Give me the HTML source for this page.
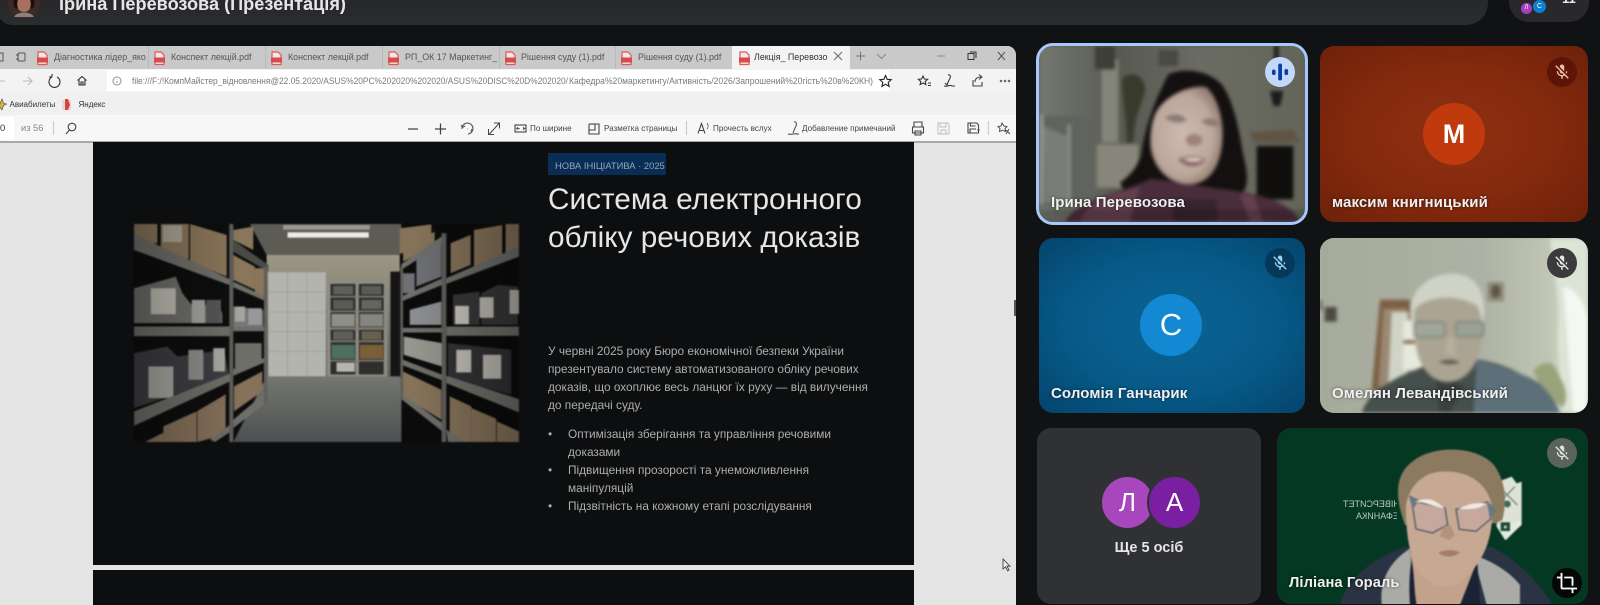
<!DOCTYPE html>
<html lang="uk"><head><meta charset="utf-8"><title>Meet</title>
<style>
*{box-sizing:border-box}
html,body{margin:0;padding:0;width:1600px;height:605px;overflow:hidden;background:#111213;font-family:"Liberation Sans","Noto Sans CJK SC",sans-serif}
#w{position:absolute;left:0;top:0;width:1600px;height:605px;overflow:hidden;filter:blur(.35px)}
.a{position:absolute}
.t{position:absolute;white-space:nowrap}
.tab{position:absolute;top:46px;height:23px;border-right:1px solid #b9b9b9}
.tab span{position:absolute;left:21px;top:6px;font-size:8.9px;color:#555;white-space:nowrap}
.tile{position:absolute;border-radius:14px;overflow:hidden}
.name{position:absolute;font-size:15px;font-weight:bold;color:#f0f0f0;white-space:nowrap;text-shadow:0 0 3px rgba(0,0,0,.55);letter-spacing:.1px}
.av{position:absolute;border-radius:50%;color:#fff;text-align:center}
.ic{position:absolute;width:30px;height:30px;border-radius:50%}
.ic svg{position:absolute;left:6px;top:6px;width:18px;height:18px}
.lb{position:absolute;top:124px;font-size:8.100px;color:#444;white-space:nowrap}
.sl{position:absolute;left:548px;font-size:11.850px;color:#aeaeae;white-space:nowrap;line-height:18px}
svg{display:block}
</style></head><body><div id="w">

<!-- top bar -->
<div class="a" style="left:-2px;top:-20px;width:1490px;height:45px;background:linear-gradient(#232426,#2b2c2f);border-radius:0 0 22px 14px"></div>
<svg class="a" style="left:6px;top:-15px" width="36" height="36" viewBox="0 0 36 36"><circle cx="18" cy="18" r="16" fill="#3b2a26"/><ellipse cx="18" cy="17" rx="8" ry="10" fill="#a8705e"/><path d="M8 22C6 8 12 4 18 4s12 4 10 18l-4 2c2-8 0-12-6-12s-8 4-6 12z" fill="#1d0e0b"/><path d="M8 32c3-6 17-6 20 0z" fill="#8a7f7a"/></svg>
<div class="t" style="left:59px;top:-6px;font-size:18.150px;font-weight:bold;color:#e6e6e6;line-height:20px">Ірина Перевозова (Презентація)</div>
<div class="a" style="left:1509px;top:-20px;width:80px;height:42px;background:#29292c;border-radius:0 0 20px 20px"></div>
<div class="av" style="left:1521px;top:3px;width:11px;height:11px;background:#a63fc0;font-size:6px;line-height:11px">Л</div>
<div class="av" style="left:1533px;top:0;width:13px;height:13px;background:#0b82d0;font-size:7px;line-height:13px">С</div>
<div class="t" style="left:1562px;top:-9px;font-size:13px;font-weight:bold;color:#eee;line-height:15px">11</div>

<!-- browser -->
<div class="a" style="left:-10px;top:46px;width:1026px;height:570px;background:#e4e4e4;border-radius:0 9px 0 0;overflow:hidden">
<div class="a" style="left:0;top:0;width:1026px;height:23px;background:#c9c9c9"></div>
<div class="a" style="left:0;top:23px;width:1026px;height:23px;background:#f3f3f3"></div>
<div class="a" style="left:117px;top:24px;width:782px;height:21px;background:#fff"></div>
<div class="a" style="left:0;top:46px;width:1026px;height:23px;background:#f0f0f0"></div>
<div class="a" style="left:0;top:69px;width:1026px;height:26px;background:#f7f7f7"></div>
<div class="a" style="left:0;top:95px;width:1026px;height:1.5px;background:#a9a9a9"></div>
<div class="a" style="left:10px;top:71px;width:14px;height:23px;background:#fff"></div>
</div>

<svg class="a" style="left:0;top:46px" width="1016" height="23" viewBox="0 0 1016 23" fill="none" stroke="#555" stroke-width="1">
<rect x="-4" y="7" width="7" height="8" /><rect x="18" y="7" width="7" height="8" rx="1"/><path d="M16 9h3M16 13h3"/>
<g id="p"><path d="M38 6h6l3 3v9.500H38z" fill="#f6e6e6" stroke="#d85a5a" stroke-width="1.200"/><rect x="37" y="11.500" width="11" height="5" fill="#d94a4a" stroke="none"/></g>
<use href="#p" x="117"/><use href="#p" x="234"/><use href="#p" x="351"/><use href="#p" x="468"/><use href="#p" x="584"/>
</svg>
<div class="tab" style="left:33px;width:116px"><span>Діагностика лідер_яко</span></div>
<div class="tab" style="left:149px;width:117px"><span style="left:22px">Конспект лекцій.pdf</span></div>
<div class="tab" style="left:266px;width:117px"><span style="left:22px">Конспект лекцій.pdf</span></div>
<div class="tab" style="left:383px;width:117px"><span style="left:22px">РП_ОК 17 Маркетинг_</span></div>
<div class="tab" style="left:500px;width:116px"><span style="left:21px">Рішення суду (1).pdf</span></div>
<div class="tab" style="left:616px;width:116px;border:0"><span style="left:22px">Рішення суду (1).pdf</span></div>
<div class="a" style="left:732px;top:46px;width:118px;height:23px;background:#f3f3f3"></div>
<svg class="a" style="left:0;top:46px" width="1016" height="23" viewBox="0 0 1016 23" fill="none" stroke="#666" stroke-width="1">
<g><path d="M740 6h6l3 3v9.500h-9z" fill="#f6e6e6" stroke="#d85a5a" stroke-width="1.200"/><rect x="739" y="11.500" width="11" height="5" fill="#d94a4a" stroke="none"/></g>
<path d="M834 6l8 8M842 6l-8 8"/><path d="M856 10h9M860.500 5.500v9" stroke="#777"/><path d="M877 8l4.500 4.500L886 8" stroke="#888"/>
<path d="M937 10h8" stroke="#888"/><rect x="968" y="7.500" width="6" height="6" stroke="#333"/><path d="M970 6h6v6" stroke="#333"/><path d="M998 6l7 8M1005 6l-7 8" stroke="#555"/>
</svg>
<div class="t" style="left:754px;top:52px;font-size:8.900px;color:#333">Лекція_ Перевозо</div>

<svg class="a" style="left:0;top:69px" width="1016" height="22" viewBox="0 0 1016 22" fill="none" stroke="#666" stroke-width="1.100">
<path d="M-3 12h8M-1 8l-3.500 4 3.500 4" stroke="#bbb"/><path d="M23 12h9M28 8l4 4-4 4" stroke="#bbb"/>
<path d="M52 8a5.500 5.500 0 1 0 5 0M52 8V5M52 8h-3" stroke="#333"/><path d="M77.500 11.500l4.500-4 4.500 4M79 10.500V16h6v-5.500M81 16v-3h2v3" stroke="#333"/>
<circle cx="117" cy="12" r="4" stroke="#999"/><path d="M117 10.500v.5M117 12v2" stroke="#999"/>
<path d="M885.500 6.500l1.700 3.800 4 .4-3 2.700.9 4-3.600-2.100-3.600 2.100.9-4-3-2.700 4-.4z" stroke="#222"/>
<path d="M923 7l1.400 3 3.200.3-2.400 2.100.7 3.200-2.900-1.600-2.900 1.600.7-3.200-2.400-2.100 3.200-.3zM928 14h3M928 16.500h3" stroke="#333"/>
<path d="M948 6c3-1 3 2 1 5l-2 5M944 17c4 1 6-2 8 0h3M945 14l2 2" stroke="#333"/>
<path d="M973 11v6h9v-4M975 13c0-3 2-5 6-5M979 5.500l3 2.500-3 2.500" stroke="#444"/>
<circle cx="1001" cy="12" r=".7" fill="#555"/><circle cx="1005" cy="12" r=".7" fill="#555"/><circle cx="1009" cy="12" r=".7" fill="#555"/>
<g font-family="Liberation Sans,sans-serif" font-size="9" fill="#7a7a7a" stroke="none">
<text x="132" y="15" textLength="436" lengthAdjust="spacingAndGlyphs">file:///F:/!КомпМайстер_відновлення@22.05.2020/ASUS%20PC%202020%202020/ASUS%20DISC%20D%202020/</text>
<text x="569" y="15" textLength="304" lengthAdjust="spacingAndGlyphs">Кафедра%20маркетингу/Активність/2026/Запрошений%20гість%20в%20КН)</text>
</g>
</svg>

<svg class="a" style="left:0;top:92px" width="90" height="23" viewBox="0 0 90 23"><path d="M2 7l1.500 4 3 1-3 1.500L2 18l-3-4z" fill="#d9b23a" stroke="#444" stroke-width=".6"/><path d="M62 8h9v9l-1 1h-7l-1-1z" fill="#e9d6d0"/><path d="M65 7h3l2 6-2 5h-3z" fill="#d5463a"/></svg>
<div class="t" style="left:9.500px;top:100px;font-size:8px;color:#333">Авиабилеты</div>
<div class="t" style="left:78.500px;top:100px;font-size:8px;color:#333">Яндекс</div>

<div class="t" style="left:0;top:123px;font-size:9.500px;color:#333">0</div>
<div class="t" style="left:21px;top:123px;font-size:9.300px;color:#888">из 56</div>
<svg class="a" style="left:0;top:115px" width="1016" height="26" viewBox="0 0 1016 26" fill="none" stroke="#444" stroke-width="1.100">
<path d="M53.500 6v14" stroke="#ccc"/><circle cx="72" cy="12" r="3.800"/><path d="M69.500 15l-3.500 4"/>
<path d="M408 14h10M435 14h11M440.500 8.500v11" stroke-width="1.300"/>
<path d="M462 14a5.500 5.500 0 1 1 6 5M472 14l-1 2.500M461 10l1.500 2.500 2.500-1.500M467 14h.5" stroke="#555"/>
<path d="M489 20l10-11M494 8.500h5.500V14M494 20h-5.500v-5.500" transform="translate(0 -.5)" stroke-width="1"/>
<rect x="515" y="10" width="11" height="7"/><path d="M517 13.500h3M526 13.500h-3M518 12l-1.500 1.500L518 15M523 12l1.500 1.500L523 15" stroke-width=".8"/>
<path d="M589 9v10h10V9h-4v6h-6" /><path d="M589 9h6"/>
<path d="M686.500 6v14" stroke="#ccc"/>
<path d="M698 18.500l3.500-10 3.500 10M699.500 15.500h4"/><path d="M707 8c1.500 2 1.500 4 0 6" stroke-width=".7"/>
<path d="M794 7c3-1 3 3 1 6l-2 5M788 19c4 1 7-1 9 0h2" stroke-width="1"/>
<path d="M914 12v-5h8v5M912.500 12h11v6h-11zM915 16h6v4h-6z"/>
<path d="M938 8h10l1 1v10h-11zM940 8v4h6V8M941 19v-4h5v4" stroke="#bbb" stroke-width=".9"/>
<path d="M968 8h9l1.500 2v8h-10.500zM970.500 8v3h5M970 18v-4h6" /><path d="M977 15h3M978.500 13.500v3" stroke-width=".8"/>
<path d="M988.500 6v14" stroke="#ccc"/>
<path d="M1002 8l2 3 3 .5-2 2 .5 3-3-1.300-3 1.300.5-3-2-2 3-.5zM1006 15l4 4M1009 14l-3 5" stroke-width=".9"/>
</svg>
<div class="lb" style="left:530px">По ширине</div>
<div class="lb" style="left:604px">Разметка страницы</div>
<div class="lb" style="left:713px">Прочесть вслух</div>
<div class="lb" style="left:802px">Добавление примечаний</div>

<!-- slides -->
<div class="a" style="left:93px;top:142px;width:821px;height:423px;background:#0d0e0f"></div>
<div class="a" style="left:93px;top:570px;width:821px;height:35px;background:#0d0e0f"></div>
<div class="a" style="left:1014px;top:300px;width:2px;height:16px;background:#555"></div>
<svg class="a" style="left:1002px;top:558px" width="10" height="14" viewBox="0 0 10 14"><path d="M1 1v10l2.500-2.200 2 4 1.500-.7-2-3.900H8z" fill="#eee" stroke="#333" stroke-width=".8"/></svg>

<!-- storage room -->
<svg class="a" style="left:134px;top:224px;filter:blur(.7px)" width="385" height="218" viewBox="42 42 1156 655">
<defs><linearGradient id="f" x1="0" y1="0" x2="0" y2="1"><stop offset="0" stop-color="#74776f"/><stop offset="1" stop-color="#4c4f50"/></linearGradient>
<linearGradient id="wg" x1="0" y1="0" x2="0" y2="1"><stop offset="0" stop-color="#9a9785"/><stop offset="1" stop-color="#66655a"/></linearGradient>
<linearGradient id="vg" x1="0" x2="1" y1="0" y2="0"><stop offset="0" stop-color="#000" stop-opacity=".3"/><stop offset=".28" stop-color="#000" stop-opacity="0"/><stop offset=".72" stop-color="#000" stop-opacity="0"/><stop offset="1" stop-color="#000" stop-opacity=".3"/></linearGradient></defs>
<rect x="42" y="42" width="1156" height="655" fill="#0d0d0d"/>
<polygon points="390,42 850,42 840,135 440,135" fill="#5c5c54"/>
<rect x="490" y="45" width="260" height="14" fill="#9a9a92"/>
<rect x="503" y="67" width="244" height="16" fill="#ecece2"/>
<rect x="440" y="135" width="400" height="365" fill="url(#wg)"/>
<rect x="445" y="187" width="173" height="313" fill="#b4b4ae"/>
<g stroke="#9a9a95" stroke-width="2"><path d="M445 247h173M445 307h173M445 365h173M445 425h173M503 187v313M561 187v313"/></g>
<rect x="622" y="212" width="180" height="292" fill="#8e8e86"/>
<rect x="632" y="222" width="75" height="272" fill="#2f2e2a"/><rect x="717" y="222" width="75" height="272" fill="#2f2e2a"/>
<g fill="#7e7e76"><rect x="632" y="258" width="160" height="5"/><rect x="632" y="302" width="160" height="5"/><rect x="632" y="352" width="160" height="8"/><rect x="632" y="392" width="160" height="5"/><rect x="632" y="450" width="160" height="5"/></g>
<rect x="635" y="312" width="70" height="38" fill="#8f8f88"/><rect x="720" y="312" width="70" height="38" fill="#85857f"/>
<rect x="635" y="405" width="70" height="42" fill="#4f6e60"/><rect x="720" y="405" width="70" height="42" fill="#7c5f38"/>
<rect x="650" y="458" width="55" height="28" fill="#b5b5ad"/><rect x="640" y="228" width="60" height="26" fill="#5f5f5b"/><rect x="725" y="228" width="60" height="26" fill="#5a5a56"/><rect x="640" y="270" width="60" height="28" fill="#5a5a56"/><rect x="725" y="270" width="60" height="28" fill="#65655f"/><rect x="640" y="364" width="60" height="26" fill="#5f5f5a"/><rect x="725" y="364" width="60" height="26" fill="#67604f"/>
<rect x="812" y="185" width="30" height="315" fill="#151515"/>
<polygon points="440,500 840,500 960,697 340,697" fill="url(#f)"/>
<!-- left boxes & bags -->
<g fill="#8a765a"><rect x="42" y="42" width="70" height="58"/><rect x="122" y="42" width="84" height="105"/><polygon points="210,42 320,75 320,200 210,155"/><polygon points="340,60 400,50 400,120 340,90"/><polygon points="340,135 405,170 405,240 340,210"/><rect x="405" y="175" width="38" height="85"/></g>
<rect x="128" y="46" width="58" height="50" fill="#aaa596"/>
<g fill="#6e6e6b"><path d="M42 235l55-15 70-20 20 50 40 50 60-30 20 40 0 30H42z"/><path d="M340 290l90 10v50h-90z" fill="#777"/></g>
<rect x="92" y="235" width="75" height="78" fill="#c0beb4"/><rect x="215" y="270" width="40" height="70" fill="#a3a39e"/><rect x="258" y="270" width="45" height="70" fill="#57575a"/><rect x="345" y="290" width="30" height="45" fill="#a5a5a0"/><rect x="385" y="295" width="40" height="50" fill="#98989a"/>
<g fill="#3d3e42"><path d="M42 430l100-20 30 30 140-20 15 75-130 50-155 50z"/></g>
<rect x="85" y="470" width="75" height="95" fill="#a8a8a1"/><rect x="205" y="420" width="45" height="90" fill="#8d8d89"/><rect x="280" y="415" width="35" height="70" fill="#aaaaa3"/>
<path d="M345 400h80v60l-80 15z" fill="#6e6e69"/>
<g fill="#86715a"><path d="M130 697V650l100-45v92z"/><path d="M232 604l85-50v120l-85 23z"/><path d="M342 530l85-45v60l-85 60z"/><path d="M75 697l55-28v28z"/></g>
<!-- left planks -->
<g fill="#6f6f6a"><polygon points="42,72 330,208 330,226 42,120"/><rect x="42" y="350" width="288" height="29"/><polygon points="42,605 330,492 330,515 42,648"/><polygon points="340,215 440,262 440,275 340,232"/><rect x="340" y="350" width="100" height="14"/><polygon points="340,478 440,442 440,455 340,498"/><polygon points="340,630 440,545 440,578 340,655"/><polygon points="270,690 330,645 330,667 285,697"/><polygon points="340,90 445,165 445,185 340,125" fill="#4a4a46"/></g>
<g fill="#5f5f5b"><rect x="328" y="42" width="12" height="655"/><rect x="432" y="170" width="10" height="410"/></g>
<!-- right -->
<rect x="845" y="42" width="353" height="655" fill="#0b0b0b"/>
<g fill="#86735a"><path d="M840 55l95-12v50l-95 40zM850 120l95-55v40l-95 50z"/><path d="M993 100l60-25v90l-60 25z"/><path d="M1063 60l85-15v110l-85 25z"/><path d="M1158 42h40v75l-40 12z"/></g>
<path d="M850 190l35 0v60h-35zM890 150l75-50v100l-75 30z" fill="#6e7074"/>
<path d="M870 300l95-25v70h-95z" fill="#8c8e92"/>
<path d="M1000 255l80-10v100h-80zM1085 250l50-25 60 5v115h-110z" fill="#38383a"/>
<rect x="1006" y="288" width="42" height="55" fill="#c8c6bd"/><rect x="1080" y="262" width="42" height="62" fill="#c0beb4"/><rect x="1170" y="240" width="28" height="72" fill="#b8b6ac"/>
<path d="M852 380l115 20v70l-115-35z" fill="#96978f"/>
<path d="M985 400l190 20v135l-190-50z" fill="#333336"/>
<rect x="1010" y="420" width="45" height="68" fill="#c2c0b6"/><rect x="1090" y="435" width="55" height="72" fill="#bfbdb3"/>
<g fill="#86735a"><path d="M850 485l115 55v90l-115-70z"/><path d="M990 560l65 30v108h-65z"/><path d="M1055 595l75 32v70h-75z"/><path d="M1132 635l66 30v32h-66z"/></g>
<g fill="#6f6f6a"><polygon points="845,162 968,78 968,100 845,180"/><polygon points="845,260 968,205 968,225 845,275"/><rect x="845" y="354" width="123" height="14"/><polygon points="845,448 968,495 968,512 845,465"/><polygon points="845,550 968,640 968,665 845,568"/><polygon points="980,205 1198,110 1198,140 980,222"/><rect x="980" y="350" width="218" height="28"/><polygon points="980,498 1198,568 1198,608 980,520"/><polygon points="980,660 1035,697 985,697"/></g>
<g fill="#5f5f5b"><rect x="966" y="70" width="14" height="627"/><rect x="842" y="170" width="8" height="400"/></g>
<rect x="42" y="42" width="1156" height="655" fill="url(#vg)"/>
</svg>

<!-- slide text -->
<div class="a" style="left:548px;top:153px;width:118px;height:22px;background:#0a2d55"></div>
<div class="t" style="left:555px;top:160px;font-size:9.400px;color:#94a6bb;line-height:11px">НОВА ІНІЦІАТИВА · 2025</div>
<div class="t" style="left:548px;top:181px;font-size:29.750px;color:#e6e6e6;line-height:38px">Система електронного<br>обліку речових доказів</div>
<div class="sl" style="top:342px">У червні 2025 року Бюро економічної безпеки України</div>
<div class="sl" style="top:360px">презентувало систему автоматизованого обліку речових</div>
<div class="sl" style="top:378px">доказів, що охоплює весь ланцюг їх руху — від вилучення</div>
<div class="sl" style="top:396px">до передачі суду.</div>
<div class="sl" style="top:425px">•</div><div class="sl" style="top:425px;left:568px">Оптимізація зберігання та управління речовими</div>
<div class="sl" style="top:443px;left:568px">доказами</div>
<div class="sl" style="top:461px">•</div><div class="sl" style="top:461px;left:568px">Підвищення прозорості та унеможливлення</div>
<div class="sl" style="top:479px;left:568px">маніпуляцій</div>
<div class="sl" style="top:497px">•</div><div class="sl" style="top:497px;left:568px">Підзвітність на кожному етапі розслідування</div>

<!-- tile 1 -->
<div class="tile" style="left:1039px;top:46px;width:266px;height:176px;background:#5d5f57">
<svg class="a" style="left:0;top:0;filter:blur(1.800px)" width="266" height="176" viewBox="-3 0 798 528">
<defs><linearGradient id="b1" x1="0" x2="1" y1="0" y2="0"><stop offset="0" stop-color="#74786e"/><stop offset=".3" stop-color="#585a51"/><stop offset=".6" stop-color="#6a6c63"/><stop offset="1" stop-color="#646559"/></linearGradient>
<radialGradient id="fc" cx=".46" cy=".5" r=".58"><stop offset="0" stop-color="#cdbbb1"/><stop offset=".7" stop-color="#bba79c"/><stop offset="1" stop-color="#8a7469"/></radialGradient></defs>
<rect x="-3" width="810" height="528" fill="url(#b1)"/>
<rect x="185" y="40" width="50" height="250" fill="#83857a"/><rect x="165" y="0" width="60" height="70" fill="#3d3e37"/>
<path d="M245 100c20-25 60-20 70 20 5 40-30 60-35 170h-20c0-60-10-120-15-190z" fill="#3a3a2c"/>
<rect x="355" y="12" width="60" height="48" fill="#4a4a42"/>
<rect x="0" y="210" width="155" height="270" fill="#60645e"/><path d="M10 240l70 30v200H15z" fill="#777e78"/><rect x="0" y="205" width="10" height="270" fill="#999c94"/><rect x="82" y="235" width="10" height="240" fill="#8d9188"/>
<rect x="170" y="295" width="125" height="130" fill="#86867a"/>
<path d="M650 300h110v160H650z" fill="#100f0d"/><path d="M630 260l130-10 20 40H640z" fill="#5f5544"/>
<path d="M702 0h14v120h-14zM690 135h40l-10 45h-20z" fill="#1b1b1d"/>
<path d="M385 85c45-20 115-15 160 30 30 40 50 120 60 185 8 50 25 90 10 130l-40 40H270l-30-60c30-20 55-50 65-90 5-50 30-140 80-235z" fill="#141010"/>
<path d="M75 528c40-70 160-85 260-130l200 30c90 10 215 30 245 100z" fill="#4a2d3b"/>
<path d="M120 528c30-70 80-80 180-105l-30 105zM600 445l30 83h40l-30-80z" fill="#64404f"/><rect x="400" y="460" width="130" height="68" fill="#38242e"/>
<path d="M350 195c30-50 105-80 148-72 32 25 52 90 50 148-2 85-38 144-100 144-63 0-108-50-116-110-3-40 2-80 18-110z" fill="url(#fc)"/>
<path d="M375 215c20-15 50-15 65 8-20 12-50 8-65-8zM485 225c18-14 45-8 55 12-20 6-45 2-55-12z" fill="#8a7c74"/>
<ellipse cx="462" cy="282" rx="25" ry="18" fill="#9c8379"/><path d="M415 340c25-12 60-12 82 2-20 25-62 25-82-2z" fill="#85625f"/><path d="M428 340c25-6 45-6 62 2-20 8-45 6-62-2z" fill="#e5dbd6"/>
<rect y="490" x="-3" width="810" height="38" fill="#000" opacity=".18"/>
</svg>
</div>
<div class="a" style="left:1036px;top:43px;width:272px;height:182px;border:3px solid #a8c7fa;border-radius:17px"></div>
<div class="name" style="left:1051px;top:194px">Ірина Перевозова</div>
<div class="ic" style="left:1265px;top:57px;background:#c2d7fa"><svg viewBox="0 0 18 18"><rect x="1" y="6.500" width="3.600" height="5.500" rx="1.800" fill="#0a3f9e"/><rect x="7.200" y=".5" width="3.800" height="17" rx="1.900" fill="#0a3f9e"/><rect x="13.500" y="6" width="3.600" height="6" rx="1.800" fill="#0a3f9e"/></svg></div>

<!-- tile 2 -->
<div class="tile" style="left:1320px;top:46px;width:268px;height:176px;background:radial-gradient(ellipse at 50% 50%,#8f2f10 0%,#852a0e 50%,#6e210a 100%)"></div>
<div class="av" style="left:1423px;top:103px;width:62px;height:62px;background:#c13a0e;font-size:27px;font-weight:bold;line-height:62px">М</div>
<div class="name" style="left:1332px;top:194px">максим книгницький</div>
<div class="ic" style="left:1547px;top:57px;background:#5c1506"><svg viewBox="0 0 24 24" fill="#f3c0b0"><path d="M19 11h-1.700c0 .74-.16 1.430-.43 2.050l1.230 1.230c.56-.98.9-2.090.9-3.280zm-4.020.17c0-.06.02-.11.02-.17V5c0-1.660-1.340-3-3-3s-3 1.340-3 3v.18l5.980 5.990zM4.270 3L3 4.270l6.010 6.010V11c0 1.660 1.330 3 2.990 3 .22 0 .44-.03.65-.08l1.660 1.660c-.71.33-1.500.52-2.310.52-2.760 0-5.300-2.100-5.300-5.100H5c0 3.410 2.720 6.230 6 6.720V21h2v-3.280c.91-.13 1.770-.45 2.540-.9L19.730 21 21 19.730 4.270 3z"/></svg></div>

<!-- tile 3 -->
<div class="tile" style="left:1039px;top:238px;width:266px;height:175px;background:radial-gradient(ellipse at 50% 50%,#0a6494 0%,#075a88 55%,#04446c 100%)"></div>
<div class="av" style="left:1140px;top:294px;width:62px;height:62px;background:#1289d2;font-size:31px;line-height:62px">С</div>
<div class="name" style="left:1051px;top:385px">Соломія Ганчарик</div>
<div class="ic" style="left:1265px;top:248px;background:#05395a"><svg viewBox="0 0 24 24" fill="#9fd0f0"><path d="M19 11h-1.700c0 .74-.16 1.430-.43 2.050l1.230 1.230c.56-.98.9-2.090.9-3.280zm-4.020.17c0-.06.02-.11.02-.17V5c0-1.660-1.340-3-3-3s-3 1.340-3 3v.18l5.980 5.990zM4.270 3L3 4.270l6.010 6.010V11c0 1.660 1.330 3 2.990 3 .22 0 .44-.03.65-.08l1.660 1.660c-.71.33-1.500.52-2.310.52-2.760 0-5.300-2.100-5.300-5.100H5c0 3.410 2.720 6.230 6 6.720V21h2v-3.280c.91-.13 1.770-.45 2.540-.9L19.730 21 21 19.730 4.270 3z"/></svg></div>

<!-- tile 4 -->
<div class="tile" style="left:1320px;top:238px;width:268px;height:175px;background:#aeb2a1">
<svg class="a" style="left:0;top:0;filter:blur(1.800px)" width="268" height="175" viewBox="0 3 804 525">
<defs><linearGradient id="b4" x1="0" x2="1" y1="0" y2="0"><stop offset="0" stop-color="#a5aa9b"/><stop offset=".6" stop-color="#aeb2a4"/><stop offset=".85" stop-color="#c0c5b4"/><stop offset="1" stop-color="#e8f0e4"/></linearGradient></defs>
<rect y="0" width="810" height="530" fill="url(#b4)"/>
<path d="M690 0h120v530H730c-10-100-20-200-15-270 5-100-20-180-25-260z" fill="#dce4d6"/>
<path d="M730 150c40 0 70 60 80 120v260h-50z" fill="#f3f8f0"/>
<path d="M640 400c30-30 60-30 70 0 20 40 40 70 20 110-30-10-70-50-90-110z" fill="#9aa37c"/>
<rect x="14" y="210" width="36" height="44" fill="#4c4a42"/><rect x="0" y="190" width="6" height="30" fill="#4c4a42"/>
<rect x="502" y="135" width="50" height="58" fill="#8d8b78"/><ellipse cx="527" cy="163" rx="14" ry="20" fill="#5e5546"/>
<path d="M155 460l25-272h90v260z" fill="#7d5f45"/><path d="M175 450l15-235h70v220z" fill="#9a8872"/>
<path d="M215 225l50 0v215l-60 0z" fill="#d0d4c6"/><rect x="250" y="250" width="55" height="150" fill="#e6e9dd"/><rect x="250" y="310" width="35" height="10" fill="#7d5f45"/>
<path d="M125 528c20-70 120-120 220-150 60 20 80 20 130-10 60 10 180 40 240 160z" fill="#454f4c"/>
<path d="M470 370c40 10 130 30 190 70 30 30 50 60 60 88H460z" fill="#5d7079"/>
<path d="M340 380l90 70-40 78h-30z" fill="#3a403e"/>
<path d="M272 230c-5-70 55-120 125-120s100 55 95 125l-10 70-205-5z" fill="#cfd3c7"/>
<path d="M285 215c50-45 130-40 185-10 20 30 18 90 12 130-15 60-50 100-100 100-45 0-80-40-92-95-8-45-10-95-5-125z" fill="#aca493"/>
<rect x="285" y="255" width="90" height="46" rx="9" fill="#a0a69a" stroke="#7e8278" stroke-width="5"/><rect x="408" y="255" width="82" height="44" rx="9" fill="#9aa298" stroke="#7e8278" stroke-width="5"/>
<path d="M355 375c20-8 50-8 65 2-20 6-45 6-65-2z" fill="#5b5247"/><path d="M385 300l-12 50 34 5-5-55z" fill="#b8b09d"/>
</svg>
</div>
<div class="name" style="left:1332px;top:385px">Омелян Левандівський</div>
<div class="ic" style="left:1547px;top:248px;background:#3b3b3e"><svg viewBox="0 0 24 24" fill="#eaeaea"><path d="M19 11h-1.700c0 .74-.16 1.430-.43 2.050l1.230 1.230c.56-.98.9-2.090.9-3.280zm-4.020.17c0-.06.02-.11.02-.17V5c0-1.660-1.340-3-3-3s-3 1.340-3 3v.18l5.980 5.990zM4.270 3L3 4.270l6.010 6.010V11c0 1.660 1.330 3 2.990 3 .22 0 .44-.03.65-.08l1.660 1.660c-.71.33-1.500.52-2.310.52-2.760 0-5.300-2.100-5.300-5.100H5c0 3.410 2.720 6.230 6 6.720V21h2v-3.280c.91-.13 1.770-.45 2.540-.9L19.730 21 21 19.730 4.270 3z"/></svg></div>

<!-- tile 5 -->
<div class="tile" style="left:1037px;top:428px;width:224px;height:176px;background:#303134"></div>
<div class="av" style="left:1102px;top:477px;width:51px;height:51px;background:#a847bd;font-size:26px;line-height:51px">Л</div>
<div class="av" style="left:1147px;top:475px;width:55px;height:55px;background:#7b1fa2;font-size:26px;line-height:51px;border:2px solid #303134">А</div>
<div class="t" style="left:1037px;width:224px;top:539px;text-align:center;font-size:14.500px;font-weight:bold;color:#e6e6e6;line-height:18px">Ще 5 осіб</div>

<!-- tile 6 -->
<div class="tile" style="left:1277px;top:428px;width:311px;height:176px;background:#043822">
<div class="a" style="left:66px;top:70px;width:54px;height:28px;overflow:hidden;transform:scaleX(-1);font-size:9px;line-height:12px;color:#b8c8bc;white-space:nowrap"><span class="a" style="right:0;top:0">УНІВЕРСИТЕТ</span><span class="a" style="right:13px;top:12px">СТЕФАНИКА</span></div>
<svg class="a" style="left:53px;top:2px;filter:blur(.9px)" width="258" height="175" viewBox="0 0 774 525">
<path d="M505 155l40-15 15 20 15-5v130l-50 45-25-40z" fill="#dde1d6"/>
<path d="M498 285l30 45 45-45v-15l-45 20z" fill="#e6e9e0"/><rect x="512" y="277" width="28" height="26" fill="#1b4a34"/><rect x="522" y="287" width="8" height="8" fill="#d3d8cc"/>
<path d="M512 175l50 50M555 170l-45 45" stroke="#6d8d78" stroke-width="4"/><circle cx="532" cy="222" r="10" fill="#3b6a52"/>
<path d="M30 525C50 440 140 380 225 350l110 25 150-25c60 30 130 90 185 175z" fill="#2a3343"/>
<path d="M155 525c-5-60 10-120 85-170l15 170zM430 375c50 15 110 50 140 90v60H470z" fill="#aaaaa7"/>
<path d="M240 525c-5-60 0-120 10-170h190l10 170z" fill="#1b2233"/>
<path d="M240 370c15 50 10 100 20 155h130l60-155z" fill="#c3a28c"/>
<path d="M225 285c-25-70-38-145 22-190 60-50 190-50 245 10 35 50 40 105 25 165l-20 10z" fill="#8b7a60"/>
<path d="M228 225c10-60 57-105 124-100 70 0 125 40 135 110 0 70-12 110-34 150-30 50-70 85-110 85-50-5-90-45-100-100-12-45-16-100-15-145z" fill="#c7a993"/>
<path d="M245 212l100 22 8 50-45 25-50-12zM378 238l95-22 10 50-45 38-50-6z" fill="#c6a89d" stroke="#4f5a62" stroke-width="4"/>
<path d="M236 195l32 15-20 28zM470 212l30 28-20 28z" fill="#6a7680"/>
<path d="M254 216c40-18 65-5 90 20-40-8-57-20-90-20zM385 237c30-16 58-20 84-17-20 20-58 18-84 17z" fill="#f0e8e4"/>
<path d="M325 368c20-10 50-10 65 0-20 15-50 15-65 0z" fill="#a27b6c"/><path d="M340 290l-10 30 30 10 15-15-15-30z" fill="#b3917c"/>
</svg>
</div>
<div class="name" style="left:1289px;top:575px;font-size:14.700px">Ліліана Гораль</div>
<div class="ic" style="left:1547px;top:438px;background:#5b635e"><svg viewBox="0 0 24 24" fill="#dfe3df"><path d="M19 11h-1.700c0 .74-.16 1.430-.43 2.050l1.230 1.230c.56-.98.9-2.090.9-3.280zm-4.020.17c0-.06.02-.11.02-.17V5c0-1.660-1.340-3-3-3s-3 1.340-3 3v.18l5.980 5.990zM4.270 3L3 4.270l6.010 6.010V11c0 1.660 1.330 3 2.990 3 .22 0 .44-.03.65-.08l1.660 1.660c-.71.33-1.500.52-2.310.52-2.760 0-5.300-2.100-5.300-5.100H5c0 3.410 2.720 6.230 6 6.720V21h2v-3.280c.91-.13 1.770-.45 2.540-.9L19.730 21 21 19.730 4.270 3z"/></svg></div>
<div class="ic" style="left:1552px;top:568px;background:#050706"><svg viewBox="0 0 24 24" fill="#fff" style="left:4px;top:4px;width:22px;height:22px"><path d="M17 15h2V7c0-1.100-.9-2-2-2H9v2h8v8zM7 17V1H5v4H1v2h4v10c0 1.100.9 2 2 2h10v4h2v-4h4v-2H7z"/></svg></div>
</div></body></html>
